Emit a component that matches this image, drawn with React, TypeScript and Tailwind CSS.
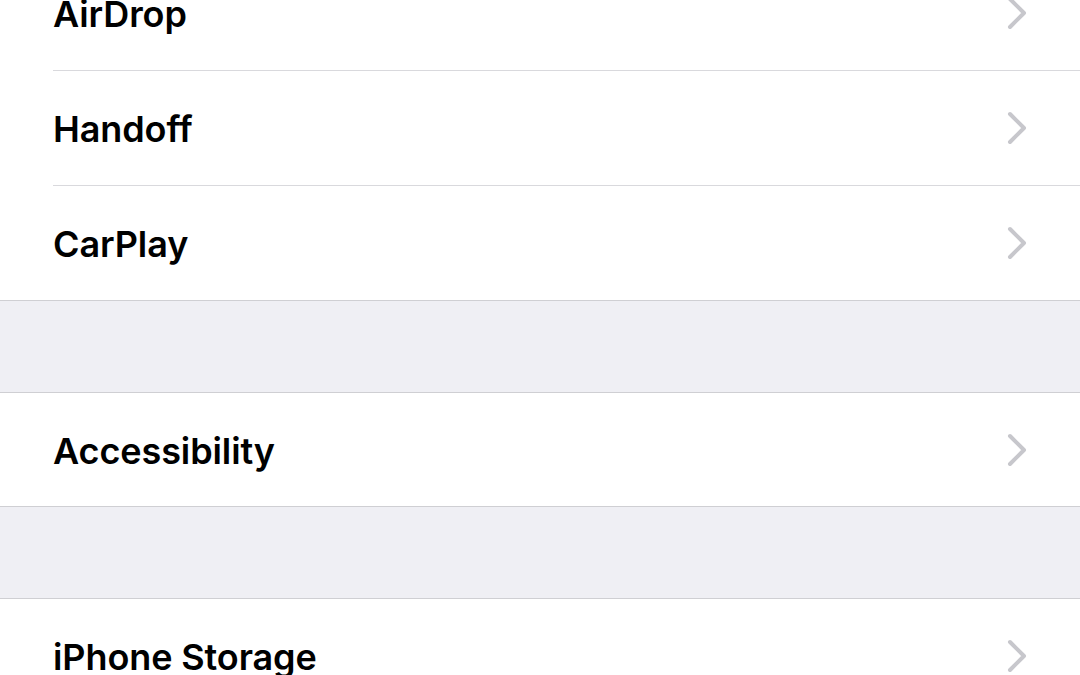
const groups = [
  { rows: ['AirDrop', 'Handoff', 'CarPlay'], first: true },
  { rows: ['Accessibility'] },
  { rows: ['iPhone Storage'] },
];

function Chevron() {
  return (
    <svg width="22" height="34" viewBox="0 0 22 34" fill="none" className="shrink-0">
      <path d="M4 3 L18 17 L4 31" stroke="#c7c7cc" strokeWidth="4" strokeLinecap="round" strokeLinejoin="round" />
    </svg>
  );
}

function Row({ label, last, h }: { label: string; last: boolean; h: string }) {
  return (
    <div className="pl-[53px]">
      <div className={`flex items-center justify-between pr-[52px] ${h} ${last ? '' : 'border-b border-[#d9d9dd]'}`}>
        <span className="pt-[2px] text-[36px] font-semibold tracking-[-0.1px] text-black">{label}</span>
        <Chevron />
      </div>
    </div>
  );
}

export default function App() {
  return (
    <div
      className="h-[675px] w-[1080px] overflow-hidden bg-[#efeff4]"
      style={{ fontFamily: 'Inter, "Noto Sans", sans-serif' }}
    >
      <div className="-mt-[44px]">
        {groups.map((g, gi) => (
          <div key={gi}>
            {gi > 0 && <div className="h-[91px] bg-[#efeff4]" />}
            <div className={`bg-white ${g.first ? '' : 'border-t border-[#cfcfd3]'} border-b border-[#cfcfd3]`}>
              {g.rows.map((r, ri) => {
                const last = ri === g.rows.length - 1;
                const h = !last ? 'h-[115px]' : g.first ? 'h-[114px]' : 'h-[113px]';
                return <Row key={r} label={r} last={last} h={h} />;
              })}
            </div>
          </div>
        ))}
      </div>
    </div>
  );
}
